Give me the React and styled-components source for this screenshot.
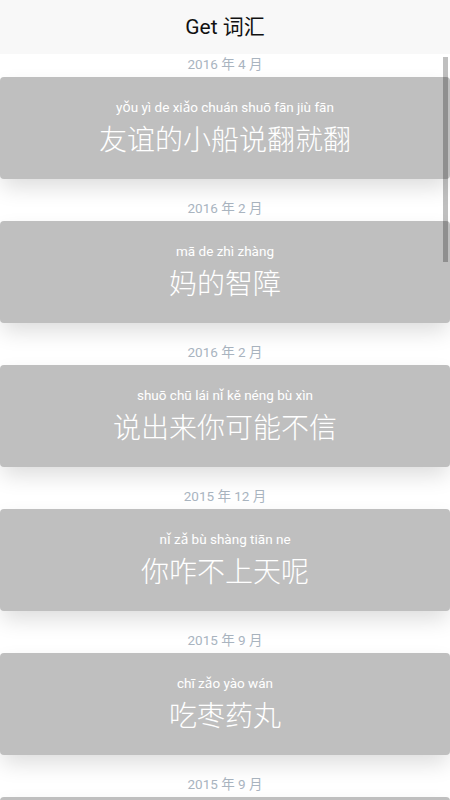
import React from 'react'
import styled, { createGlobalStyle } from 'styled-components'

const GlobalStyle = createGlobalStyle`
    html, body {
        margin: 0;
        padding: 0;
        height: 800px;
        overflow: hidden;
        background: #ffffff;
        font-family: Roboto, "Noto Sans CJK SC", sans-serif;
    }
`

const words = [
    { date: '2016 年 4 月', pinyin: 'yǒu yì de xiǎo chuán shuō fān jiù fān', text: '友谊的小船说翻就翻' },
    { date: '2016 年 2 月', pinyin: 'mā de zhì zhàng', text: '妈的智障' },
    { date: '2016 年 2 月', pinyin: 'shuō chū lái nǐ kě néng bù xìn', text: '说出来你可能不信' },
    { date: '2015 年 12 月', pinyin: 'nǐ zǎ bù shàng tiān ne', text: '你咋不上天呢' },
    { date: '2015 年 9 月', pinyin: 'chī zǎo yào wán', text: '吃枣药丸' },
    { date: '2015 年 9 月', pinyin: 'lán shòu xiāng gū', text: '蓝瘦香菇' },
]

function WordCard({ word }) {
    return (
        <Section>
            <DateLabel>{word.date}</DateLabel>
            <Card>
                <Pinyin>{word.pinyin}</Pinyin>
                <Hanzi>{word.text}</Hanzi>
            </Card>
        </Section>
    )
}

export default function App() {
    return (
        <>
            <GlobalStyle />
            <Page>
                <Header>
                    <Title>Get 词汇</Title>
                </Header>
                <List>
                    {words.map((w, i) => (
                        <WordCard key={i} word={w} />
                    ))}
                    <Scrollbar />
                </List>
            </Page>
        </>
    )
}

const Page = styled.div`
    width: 450px;
    height: 800px;
    display: flex;
    flex-direction: column;
    overflow: hidden;
`

const Header = styled.header`
    height: 54px;
    box-sizing: border-box;
    padding-bottom: 5px;
    flex-shrink: 0;
    background: #f8f8f8;
    display: flex;
    align-items: center;
    justify-content: center;
    position: relative;
    z-index: 2;
`

const Title = styled.h1`
    margin: 0;
    font-size: 21px;
    font-weight: 400;
    color: #111111;
    font-family: Roboto, "Noto Sans CJK SC", sans-serif;
`

const List = styled.div`
    flex: 1;
    position: relative;
    overflow: hidden;
    background: #ffffff;
`

const Section = styled.section`
    display: flex;
    flex-direction: column;
    margin-bottom: 19px;
`

const DateLabel = styled.div`
    height: 20px;
    line-height: 21px;
    margin-bottom: 3px;
    text-align: center;
    font-size: 13.5px;
    color: #a9b4bf;
`

const Card = styled.div`
    height: 102px;
    box-sizing: border-box;
    padding-top: 20px;
    background: #bfbfbf;
    border-radius: 4px;
    box-shadow: 0 10px 22px -2px rgba(0, 0, 0, 0.14);
    display: flex;
    flex-direction: column;
    align-items: center;
    color: #ffffff;
    position: relative;
    z-index: 1;
`

const Pinyin = styled.div`
    font-size: 13.5px;
    line-height: 20px;
`

const Hanzi = styled.div`
    margin-top: 4px;
    font-size: 28px;
    font-weight: 300;
    line-height: 34px;
    font-family: "Noto Sans CJK SC", sans-serif;
`

const Scrollbar = styled.div`
    position: absolute;
    top: 3px;
    right: 2px;
    width: 5px;
    height: 205px;
    background: rgba(0, 0, 0, 0.25);
    z-index: 3;
`
